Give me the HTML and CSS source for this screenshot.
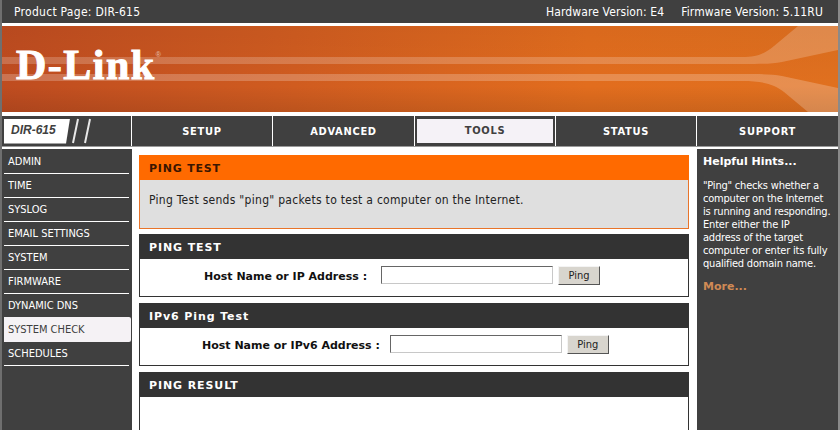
FILE: index.html
```html
<!DOCTYPE html>
<html lang="en">
<head>
<meta charset="utf-8">
<title>D-Link DIR-615</title>
<link rel="stylesheet" href="styles.css">
</head>
<body>
<div class="page">
  <header class="topbar">
    <span>Product Page: DIR-615</span>
    <span class="versions"><span>Hardware Version: E4</span><span>Firmware Version: 5.11RU</span></span>
  </header>
  <div class="banner">
    <svg class="banner-art" viewBox="0 0 836 86" preserveAspectRatio="none" aria-hidden="true">
      <defs>
        <linearGradient id="bg" x1="0" x2="1" y1="0" y2="0">
          <stop offset="0" stop-color="#bf4c20"/>
          <stop offset=".35" stop-color="#d05c20"/>
          <stop offset=".7" stop-color="#e26d1e"/>
          <stop offset="1" stop-color="#e0701f"/>
        </linearGradient>
        <linearGradient id="shade" x1="0" x2="0" y1="0" y2="1">
          <stop offset="0" stop-color="#000" stop-opacity=".04"/>
          <stop offset=".7" stop-color="#000" stop-opacity="0"/>
          <stop offset="1" stop-color="#000" stop-opacity=".1"/>
        </linearGradient>
      </defs>
      <rect width="836" height="86" fill="url(#bg)"/>
      <rect width="836" height="86" fill="url(#shade)"/>
      <path d="M0 31H740C755 31 762 28 772 20L796 0H836V24L780 36C770 38 760 38 740 38H0Z" fill="#fff" opacity=".2"/>
      <path d="M0 48H740C760 48 770 48 780 50L836 62V86H806L782 66C772 58 760 55 740 55H0Z" fill="#fff" opacity=".22"/>
    </svg>
    <div class="logo">D-Link<sup>®</sup></div>
  </div>
  <nav class="nav">
    <div class="model">
      <span class="model-tag">DIR-615</span>
      <svg class="slashes" width="24" height="26" viewBox="0 0 24 26" aria-hidden="true"><path d="M8 1 3 25M20 1 15 25" stroke="#e8e8e8" stroke-width="2" fill="none"/></svg>
    </div>
    <div class="tab">SETUP</div>
    <div class="tab">ADVANCED</div>
    <div class="tab tab-active"><span>TOOLS</span></div>
    <div class="tab">STATUS</div>
    <div class="tab">SUPPORT</div>
  </nav>
  <div class="columns">
    <aside class="side">
      <div class="side-item">ADMIN</div>
      <div class="side-item">TIME</div>
      <div class="side-item">SYSLOG</div>
      <div class="side-item">EMAIL SETTINGS</div>
      <div class="side-item">SYSTEM</div>
      <div class="side-item">FIRMWARE</div>
      <div class="side-item side-before">DYNAMIC DNS</div>
      <div class="side-item side-active">SYSTEM CHECK</div>
      <div class="side-item">SCHEDULES</div>
    </aside>
    <main class="main">
      <section class="intro">
        <h1 class="intro-head">PING TEST</h1>
        <p class="intro-body">Ping Test sends "ping" packets to test a computer on the Internet.</p>
      </section>
      <section class="box">
        <h2 class="box-head">PING TEST</h2>
        <div class="form-row form-a">
          <label class="form-label">Host Name or IP Address :</label>
          <input class="field" type="text">
          <button class="btn" type="button">Ping</button>
        </div>
      </section>
      <section class="box">
        <h2 class="box-head">IPv6 Ping Test</h2>
        <div class="form-row form-b">
          <label class="form-label">Host Name or IPv6 Address :</label>
          <input class="field" type="text">
          <button class="btn" type="button">Ping</button>
        </div>
      </section>
      <section class="box box-result">
        <h2 class="box-head">PING RESULT</h2>
      </section>
    </main>
    <aside class="hints">
      <h3 class="hints-title">Helpful Hints...</h3>
      <p class="hints-text">"Ping" checks whether a<br>computer on the Internet<br>is running and responding.<br>Enter either the IP<br>address of the target<br>computer or enter its fully<br>qualified domain name.</p>
      <a class="hints-more">More...</a>
    </aside>
  </div>
</div>
</body>
</html>
```

FILE: styles.css
```css
html, body {
  margin: 0;
  height: 430px;
  overflow: hidden;
  background: #fff;
}
.page {
  width: 836px;
  height: 430px;
  overflow: hidden;
  background: #fff;
  border-left: 2px solid #6f6f6f;
  border-right: 2px solid #8a8a8a;
  font-family: "DejaVu Sans", sans-serif;
  font-size: 11px;
  color: #000;
}
.topbar {
  height: 23px;
  background: #404040;
  color: #fff;
  display: flex;
  justify-content: space-between;
  align-items: center;
  padding: 0 15px 0 12px;
  font-family: "DejaVu Sans Condensed", "DejaVu Sans", sans-serif;
  font-size: 12px;
  letter-spacing: .28px;
}
.versions { display: flex; gap: 17px; letter-spacing: .12px; }
.banner {
  position: relative;
  height: 86px;
  margin-top: 3px;
}
.banner-art { display: block; width: 100%; height: 100%; }
.logo {
  position: absolute;
  left: 14px;
  top: 16px;
  font-family: "Liberation Serif", serif;
  font-weight: bold;
  font-size: 42px;
  line-height: 46px;
  color: #fff;
  letter-spacing: 1.5px;
  -webkit-text-stroke: 1px #fff;
  white-space: nowrap;
}
.logo sup {
  font-size: 7px;
  font-family: "Liberation Sans", sans-serif;
  font-weight: normal;
  vertical-align: 22px;
  line-height: 0;
  opacity: .6;
  letter-spacing: 0;
  -webkit-text-stroke: 0;
}
.nav {
  display: grid;
  grid-template-columns: 129px 140px 141px 140px 140px 1fr;
  height: 30px;
  margin-top: 4px;
  border-bottom: 1px solid #9a9a9a;
  background: #fff;
  column-gap: 1px;
}
.model {
  background: #404040;
  display: flex;
  align-items: center;
  padding-left: 2px;
  box-sizing: border-box;
}
.model-tag {
  width: 66px;
  height: 25px;
  box-sizing: border-box;
  padding-left: 7px;
  background: #fff;
  clip-path: polygon(0 0, 100% 0, 94% 100%, 0 100%);
  font-family: "Liberation Sans", sans-serif;
  font-weight: bold;
  font-style: italic;
  font-size: 12px;
  line-height: 23px;
  color: #404040;
}
.slashes { flex: none; }
.tab {
  background: #404040;
  color: #fff;
  font-family: "DejaVu Sans Condensed", "DejaVu Sans", sans-serif;
  font-weight: bold;
  font-size: 11px;
  letter-spacing: .7px;
  display: flex;
  align-items: center;
  justify-content: center;
}
.tab-active {
  padding: 3px 2px;
  box-sizing: border-box;
}
.tab-active span {
  flex: 1;
  align-self: stretch;
  background: #f5f2f7;
  color: #404040;
  text-align: center;
  line-height: 24px;
}
.columns {
  display: flex;
  height: 290px;
  margin-top: 2px;
}
.side {
  width: 130px;
  flex: none;
  background: #404040;
  padding: 1px 0 0 2px;
  box-sizing: border-box;
}
.side-item {
  height: 24px;
  line-height: 23px;
  box-sizing: border-box;
  padding-left: 4px;
  width: 125px;
  border-bottom: 1px solid #fff;
  color: #fff;
  font-family: "DejaVu Sans Condensed", "DejaVu Sans", sans-serif;
  font-size: 11px;
}
.side-before { border-bottom-color: transparent; }
.side-active {
  width: 127px;
  height: 25px;
  margin-top: -1px;
  background: #f5f2f5;
  color: #404040;
  border-bottom: 0;
  line-height: 25px;
  border-radius: 0 2px 2px 0;
}
.main {
  width: 565px;
  flex: none;
  padding: 6px 8px 0 7px;
  box-sizing: border-box;
  display: flex;
  flex-direction: column;
  gap: 6px;
}
.intro {
  border: 1px solid #e8742a;
  border-top: 0;
  background: #dfdfdf;
  height: 74px;
  box-sizing: border-box;
  margin-bottom: -1px;
  flex: none;
}
.intro-head {
  margin: 0 -1px;
  height: 25px;
  line-height: 27px;
  padding-left: 10px;
  background: #ff6a00;
  color: #3a1500;
  font-size: 11px;
  letter-spacing: .8px;
}
.intro-body {
  margin: 0;
  padding: 13px 0 0 9px;
  font-family: "DejaVu Sans Condensed", "DejaVu Sans", sans-serif;
  font-size: 12px;
  letter-spacing: .28px;
  line-height: 15px;
  color: #222;
}
.box {
  border: 1px solid #333;
  border-top: 0;
  height: 63px;
  box-sizing: border-box;
  flex: none;
}
.box-result { height: 90px; }
.box-head {
  margin: 0 -1px;
  height: 25px;
  line-height: 27px;
  padding-left: 10px;
  background: #333;
  color: #fff;
  font-size: 11px;
  letter-spacing: .9px;
}
.form-row {
  display: flex;
  align-items: center;
  height: 34px;
  box-sizing: border-box;
  padding-bottom: 2px;
}
.form-a { padding-left: 64px; }
.form-b { padding-left: 62px; }
.form-label {
  font-weight: bold;
  font-size: 11px;
  color: #111;
  padding-top: 2px;
}
.form-a .form-label { margin-right: 14px; }
.form-b .form-label { margin-right: 10px; }
.field {
  width: 172px;
  height: 18px;
  box-sizing: border-box;
  border: 1px solid #c8c8c8;
  border-top-color: #666;
  border-left-color: #666;
  background: #fff;
  padding: 0;
  margin: 0 5px 0 0;
}
.btn {
  width: 42px;
  height: 19px;
  box-sizing: border-box;
  padding: 0;
  margin: 0;
  background: #d8d5ce;
  border: 1px solid;
  border-color: #f4f4f4 #555 #555 #f4f4f4;
  font-family: "DejaVu Sans Condensed", "DejaVu Sans", sans-serif;
  font-size: 11px;
  color: #222;
}
.hints {
  flex: 1;
  background: #404040;
  color: #fff;
  padding: 5px 6px 0 6px;
  box-sizing: border-box;
}
.hints-title {
  margin: 0;
  font-size: 11px;
  line-height: 16px;
}
.hints-text {
  margin: 9px 0 0;
  font-family: "DejaVu Sans Condensed", "DejaVu Sans", sans-serif;
  font-size: 11px;
  letter-spacing: -.2px;
  line-height: 13px;
  white-space: nowrap;
}
.hints-more {
  display: block;
  margin-top: 9px;
  font-weight: bold;
  font-size: 11px;
  line-height: 16px;
  color: #d08a55;
}
```
